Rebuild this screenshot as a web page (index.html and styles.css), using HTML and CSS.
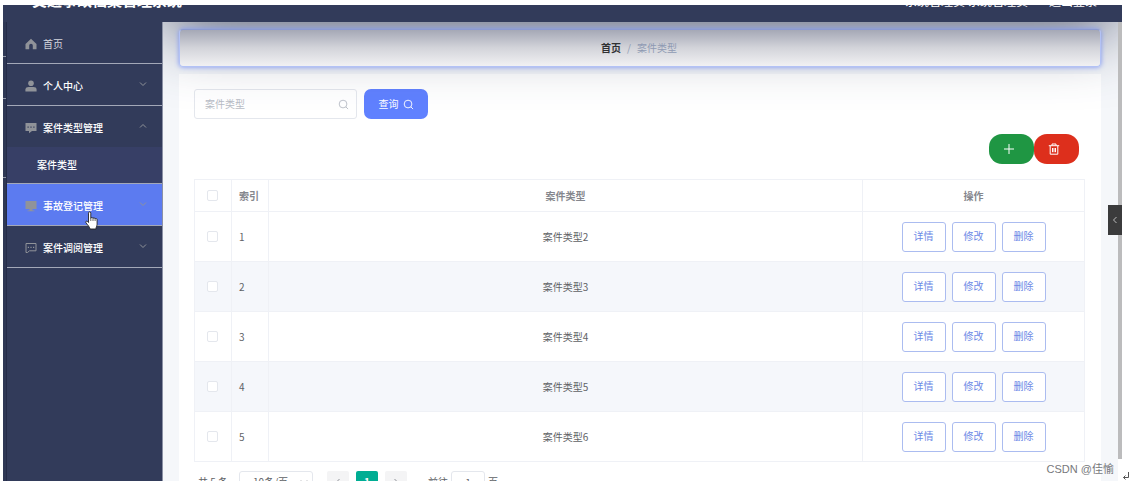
FILE: index.html
```html
<!DOCTYPE html>
<html lang="zh-CN">
<head>
<meta charset="utf-8">
<title>交通事故档案管理系统</title>
<link rel="stylesheet" href="styles.css">
</head>
<body>
<div class="screen">
  <header class="header">
    <h1 class="title">交通事故档案管理系统</h1>
    <div class="account"><span>系统管理员</span><span>系统管理员</span><a class="logout" href="#">退出登录</a></div>
  </header>
  <div class="layout">
    <div class="rail"></div>
    <nav class="menu">
      <a class="item plain" href="#">
        <svg class="icon" viewBox="0 0 12 12"><path fill="currentColor" d="M6 .8 11.5 6v5.2H7.8V7.6a1.8 1.8 0 0 0-3.6 0v3.6H.5V6z"/></svg>
        <span>首页</span>
      </a>
      <a class="item" href="#">
        <svg class="icon" viewBox="0 0 12 12"><circle cx="6" cy="3.2" r="2.8" fill="currentColor"/><path fill="currentColor" d="M.4 11.4V9.6C.4 7.8 2 7 3.6 7h4.8c1.800 0 3.200.8 3.200 2.600v1.800z"/></svg>
        <span>个人中心</span>
        <svg class="arrow" viewBox="0 0 8 8"><path d="M1 2.500 4 5.500 7 2.500"/></svg>
      </a>
      <a class="item open" href="#">
        <svg class="icon" viewBox="0 0 12 12"><path fill="currentColor" fill-rule="evenodd" d="M.5 1h11v8H7L4 11.300V9H.5zM2.500 4.500v1.200h1.200V4.500zm2.900 0v1.200h1.200V4.500zm2.900 0v1.200h1.200V4.500z"/></svg>
        <span>案件类型管理</span>
        <svg class="arrow" viewBox="0 0 8 8"><path d="M1 5.500 4 2.500 7 5.500"/></svg>
      </a>
      <a class="subitem" href="#">案件类型</a>
      <a class="item active" href="#">
        <svg class="icon" viewBox="0 0 12 12"><path fill="currentColor" d="M.5 1h11v8H7.500v1.500H9.500v.8h-7v-.8h2V9h-4z"/></svg>
        <span>事故登记管理</span>
        <svg class="arrow" viewBox="0 0 8 8"><path d="M1 2.500 4 5.500 7 2.500"/></svg>
        <svg class="cursor" viewBox="0 0 13 19"><path fill="#fff" stroke="#222" stroke-width=".9" stroke-linejoin="round" d="M3.500 11.500V2.200c0-1.900 2.300-1.900 2.300 0v5c.3-1 2-.9 2.200.2.400-.8 1.900-.7 2.100.4.500-.7 2-.4 2 .9v4.500c0 1.500-1 2.500-1.200 4.800H5c-.3-2-1.800-3.300-4-6.200-1-1.500.8-2.500 2.500-.3z"/><path stroke="#222" stroke-width=".7" d="M5.800 7v3M8 7.400V10M10.100 7.800V10"/></svg>
      </a>
      <a class="item" href="#">
        <svg class="icon" viewBox="0 0 12 12"><path fill="none" stroke="currentColor" d="M1 1.500h10v7.300H4.500L2.500 10.500H1z"/><path fill="currentColor" d="M2.800 4.800H4V6H2.800zm2.600 0h1.200V6H5.400zm2.600 0h1.200V6H8z"/></svg>
        <span>案件调阅管理</span>
        <svg class="arrow" viewBox="0 0 8 8"><path d="M1 2.500 4 5.500 7 2.500"/></svg>
      </a>
    </nav>
    <main class="main">
      <div class="breadcrumb"><a class="crumb-home" href="#">首页</a><span>/</span><span>案件类型</span></div>
      <section class="card">
        <form class="search">
          <label class="field">
            <input type="text" placeholder="案件类型" aria-label="案件类型">
            <svg viewBox="0 0 12 12"><circle cx="5.500" cy="5.500" r="4.200"/><path d="M8.600 8.600 11 11"/></svg>
          </label>
          <button class="query" type="button">查询<svg viewBox="0 0 12 12"><circle cx="5.500" cy="5.500" r="4.200"/><path d="M8.600 8.600 11 11"/></svg></button>
        </form>
        <div class="tools">
          <button class="add" type="button" aria-label="新增"><svg viewBox="0 0 12 12"><path d="M6 1v10M1 6h10"/></svg></button>
          <button class="remove" type="button" aria-label="删除"><svg viewBox="0 0 12 12"><path d="M.8 2.700h10.400M4 2.500V1h4v1.500M2.200 3v8.200h7.600V3M4.500 5v4.200M6 5v4.200M7.500 5v4.200"/></svg></button>
        </div>
        <table class="table">
          <colgroup><col class="c-check"><col class="c-index"><col><col class="c-ops"></colgroup>
          <thead><tr><th><input type="checkbox" aria-label="全选"></th><th class="index">索引</th><th>案件类型</th><th>操作</th></tr></thead>
          <tbody>
            <tr><td><input type="checkbox" aria-label="选择 1"></td><td class="index">1</td><td>案件类型2</td><td><div class="ops"><button type="button">详情</button><button type="button">修改</button><button type="button">删除</button></div></td></tr>
            <tr><td><input type="checkbox" aria-label="选择 2"></td><td class="index">2</td><td>案件类型3</td><td><div class="ops"><button type="button">详情</button><button type="button">修改</button><button type="button">删除</button></div></td></tr>
            <tr><td><input type="checkbox" aria-label="选择 3"></td><td class="index">3</td><td>案件类型4</td><td><div class="ops"><button type="button">详情</button><button type="button">修改</button><button type="button">删除</button></div></td></tr>
            <tr><td><input type="checkbox" aria-label="选择 4"></td><td class="index">4</td><td>案件类型5</td><td><div class="ops"><button type="button">详情</button><button type="button">修改</button><button type="button">删除</button></div></td></tr>
            <tr><td><input type="checkbox" aria-label="选择 5"></td><td class="index">5</td><td>案件类型6</td><td><div class="ops"><button type="button">详情</button><button type="button">修改</button><button type="button">删除</button></div></td></tr>
          </tbody>
        </table>
        <div class="pager">
          <span class="total">共 5 条</span>
          <span class="size"><select aria-label="每页条数"><option>10条/页</option></select><svg class="arrow" viewBox="0 0 8 8"><path d="M1 2.500 4 5.500 7 2.500"/></svg></span>
          <div class="pages">
            <button type="button" aria-label="上一页"><svg class="arrow" viewBox="0 0 8 8"><path d="M5.500 1 2.500 4 5.500 7"/></svg></button>
            <button class="current" type="button">1</button>
            <button type="button" aria-label="下一页"><svg class="arrow" viewBox="0 0 8 8"><path d="M2.500 1 5.500 4 2.500 7"/></svg></button>
          </div>
          <label class="jump">前往<input type="text" value="1">页</label>
        </div>
      </section>
    </main>
    <div class="scrollbar"></div>
  </div>
  <button class="drawer" type="button" aria-label="展开"><svg viewBox="0 0 8 8"><path d="M5.500 1 2.500 4 5.500 7"/></svg></button>
</div>
<div class="watermark">CSDN @佳愉</div>
<svg class="return" viewBox="0 0 8 10"><path d="M6.500 1v5.500H1.500M3.500 4.500l-2 2 2 2"/></svg>
</body>
</html>
```
FILE: styles.css
```css
* { box-sizing: border-box; }
html, body { height: 100%; }
body {
  margin: 0;
  padding: 5px 8px 3px 3px;
  position: relative;
  overflow: hidden;
  background: #fff;
  color: #606266;
  font: 10px/14px "Noto Sans CJK SC", sans-serif;
}
a { color: inherit; text-decoration: none; }
button, input, select { font: inherit; color: inherit; margin: 0; padding: 0; }
svg { fill: none; stroke: none; flex: none; }

.screen { position: relative; height: 100%; overflow: hidden; display: flex; flex-direction: column; }
.header {
  flex: none;
  height: 60px;
  margin-top: -43px;
  padding: 0 25px 12px 29px;
  display: flex;
  align-items: flex-end;
  justify-content: space-between;
  background: #323b5a;
  color: #fff;
}
.title { margin: 0; font-size: 15px; line-height: 20px; font-weight: 700; }
.account { display: flex; gap: 3px; font-size: 12px; line-height: 18px; }
.logout { margin-left: 18px; }

.layout { flex: 1; min-height: 0; display: flex; }
.rail {
  flex: none;
  width: 4px;
  border-right: 1px solid #252c48;
  background: linear-gradient(#9298a8, #9298a8) 0 34px / 100% 1px no-repeat, linear-gradient(#9298a8, #9298a8) 0 76px / 100% 1px no-repeat, linear-gradient(#9298a8, #9298a8) 0 155px / 100% 1px no-repeat, #2e3754;
}
.menu { flex: none; width: 156px; background: #323b5a; border-right: 1px solid #8b91a5; color: #fff; font-weight: 500; }
.item {
  position: relative;
  display: flex;
  align-items: center;
  gap: 6px;
  height: 42px;
  padding: 2px 15px 0 18px;
  border-bottom: 1px solid #a3a8b8;
}
.plain { color: #d4d6dd; font-weight: 400; }
.open { height: 41px; border-bottom: 0; }
.active { background: #5c7bf0; }
.item .icon { width: 12px; height: 12px; color: #909399; }
.arrow { width: 8px; height: 8px; stroke: #909399; }
.item .arrow { margin: 0 0 4px auto; }
.subitem { display: block; height: 37px; padding: 11px 0 0 30px; background: #373f66; border-bottom: 1px solid #a3a8b8; }
.cursor { position: absolute; left: 78px; top: 27px; width: 13px; height: 19px; z-index: 2; }

.main { position: relative; flex: 1; min-width: 0; padding: 7px 17px 0 16px; overflow: hidden; background: #f5f7fa; }
.main::before {
  content: "";
  position: absolute;
  z-index: 1;
  left: 0;
  right: 0;
  top: -60px;
  height: 60px;
  box-shadow: 0 4px 70px #323b5a;
  pointer-events: none;
}
.breadcrumb {
  position: relative;
  z-index: 2;
  display: flex;
  align-items: center;
  justify-content: center;
  gap: 6px;
  height: 38px;
  padding-right: 2px;
  border: 1px solid #b3c2f5;
  border-top-color: #8c9ad0;
  border-radius: 4px;
  background: linear-gradient(#a5a8b6, #d3d4da 50%, #f1f1f3);
  box-shadow: 0 0 5px #7f98f5;
  color: #8f9ab3;
}
.crumb-home { color: #303133; font-weight: 700; }
.card { margin-top: 7px; padding: 15px 16px 15px 15px; background: #fff; }
.search { display: flex; gap: 7px; }
.field { display: flex; align-items: center; width: 163px; height: 30px; padding: 0 7px 0 10px; border: 1px solid #e4e7ed; border-radius: 3px; }
.field input { flex: 1; min-width: 0; border: 0; outline: 0; background: none; }
.field input::placeholder { color: #b8bcc5; opacity: 1; }
.field svg { width: 11px; height: 11px; stroke: #b8bcc5; }
.query { display: flex; align-items: center; justify-content: center; gap: 4px; width: 64px; height: 30px; border: 0; border-radius: 7px; background: #6081ff; color: #fff; }
.query svg { width: 11px; height: 11px; stroke: #fff; }
.tools { display: flex; justify-content: flex-end; margin-top: 15px; padding-right: 6px; }
.tools button { display: flex; align-items: center; justify-content: center; width: 45px; height: 30px; padding-right: 5px; border: 0; border-radius: 13px; }
.tools svg { width: 12px; height: 12px; stroke: #fff; }
.add { background: #1f9643; }
.remove { background: #dd2f1c; }

.table { width: 100%; margin-top: 15px; table-layout: fixed; border-collapse: collapse; }
.c-check, .c-index { width: 37px; }
.c-ops { width: 222px; }
.table th, .table td { height: 50px; padding: 0; border: 1px solid #eff1f6; text-align: center; vertical-align: middle; }
.table th { height: 32px; color: #85878d; font-weight: 700; }
.table .index { padding-left: 7px; text-align: left; }
.table tbody tr:nth-child(even) { background: #f5f7fb; }
.table input { display: block; width: 11px; height: 11px; margin: 0 0 0 12px; appearance: none; border: 1px solid #e4e7ed; border-radius: 2px; background: #fff; }
.ops { display: flex; justify-content: center; gap: 6px; }
.ops button { width: 44px; height: 30px; padding-bottom: 2px; border: 1px solid #abbcf0; border-radius: 3px; background: #fff; color: #6d8ae6; }

.pager { display: flex; align-items: center; margin-top: 9px; padding-left: 4px; }
.size { position: relative; width: 74px; margin-left: 11px; }
.size select { display: block; width: 100%; height: 22px; padding-left: 13px; appearance: none; border: 1px solid #e4e7ed; border-radius: 3px; background: #fff; }
.size .arrow { position: absolute; right: 5px; top: 7px; }
.pages { display: flex; gap: 7px; margin-left: 14px; }
.pages button { display: flex; align-items: center; justify-content: center; width: 22px; height: 22px; border: 0; border-radius: 2px; background: #f4f4f5; font-weight: 700; }
.pages .current { background: #00ad93; color: #fff; }
.jump { display: flex; align-items: center; gap: 3px; margin-left: 21px; }
.jump input { width: 34px; height: 22px; border: 1px solid #e4e7ed; border-radius: 3px; text-align: center; }

.scrollbar { flex: none; width: 4px; margin-bottom: 22px; background: #bcbcbd; }
.drawer { position: absolute; right: 0; top: 200px; z-index: 2; display: flex; align-items: center; justify-content: center; width: 14px; height: 30px; border: 0; background: #3b3b3c; }
.drawer svg { width: 8px; height: 8px; stroke: #bbb; }
.watermark { position: absolute; right: 16px; bottom: 7px; color: #77787c; font: 11px/16px "Liberation Sans", "Noto Sans CJK SC", sans-serif; }
.return { position: absolute; right: 0; bottom: 3px; width: 8px; height: 10px; stroke: #555; }
```
